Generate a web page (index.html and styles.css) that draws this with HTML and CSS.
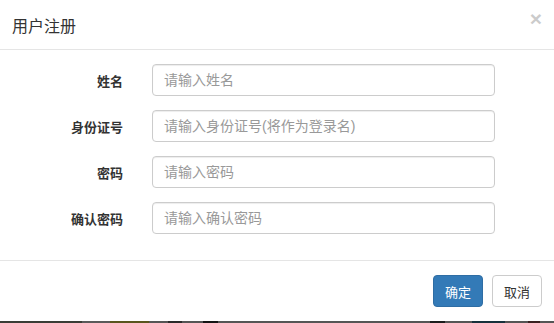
FILE: index.html
```html
<!DOCTYPE html>
<html lang="zh-CN">
<head>
  <meta charset="UTF-8">
  <title>用户注册</title>
  <link rel="stylesheet" href="styles.css">
</head>
<body>

  <div class="modal">
    <div class="modal-header">
      <h4 class="modal-title">用户注册</h4>
      <button type="button" class="close">&times;</button>
    </div>

    <form class="modal-body">
      <label for="name">姓名</label>
      <input type="text" id="name" placeholder="请输入姓名">

      <label for="idcard">身份证号</label>
      <input type="text" id="idcard" placeholder="请输入身份证号(将作为登录名)">

      <label for="pwd">密码</label>
      <input type="password" id="pwd" placeholder="请输入密码">

      <label for="pwd2">确认密码</label>
      <input type="password" id="pwd2" placeholder="请输入确认密码">
    </form>

    <div class="modal-footer">
      <button type="button" class="btn btn-primary">确定</button>
      <button type="button" class="btn btn-default">取消</button>
    </div>
  </div>

  <div class="backdrop"></div>

</body>
</html>
```

FILE: styles.css
```css
body {
  margin: 0;
  font-family: "Liberation Sans", "Noto Sans CJK SC", sans-serif;
  font-size: 14px;
  color: #333;
  background: #fff;
}

.modal {
  background: #fff;
  height: 321px;
  display: flex;
  flex-direction: column;
}

.modal-header {
  height: 49px;
  border-bottom: 1px solid #e5e5e5;
  display: flex;
  justify-content: space-between;
  align-items: center;
  padding: 0 12px 0 12px;
}

.modal-title {
  margin: 0;
  font-size: 16px;
  font-weight: normal;
  color: #333;
}

.close {
  align-self: flex-start;
  margin-top: 8px;
  padding: 0;
  border: none;
  background: none;
  font-family: "Liberation Sans", sans-serif;
  font-size: 21px;
  font-weight: bold;
  line-height: 1;
  color: #000;
  opacity: 0.2;
  cursor: pointer;
}

.modal-body {
  margin: 0;
  padding: 14px 0 26px 0;
  display: grid;
  grid-template-columns: 123px 343px;
  column-gap: 29px;
  row-gap: 14px;
  align-items: center;
  border-bottom: 1px solid #e5e5e5;
}

.modal-body label {
  text-align: right;
  font-size: 13px;
  font-weight: bold;
}

.modal-body input {
  height: 32px;
  box-sizing: border-box;
  padding: 6px 11px;
  border: 1px solid #ccc;
  border-radius: 4px;
  box-shadow: inset 0 1px 1px rgba(0,0,0,0.075);
  font-family: "Liberation Sans", "Noto Sans CJK SC", sans-serif;
  font-size: 14px;
  color: #555;
}

.modal-body input::placeholder {
  color: #999;
}

.modal-footer {
  flex: 1;
  display: flex;
  justify-content: flex-end;
  align-items: flex-start;
  gap: 9px;
  padding: 14px 12px 0 0;
}

.btn {
  width: 50px;
  height: 32px;
  padding: 0;
  border: 1px solid transparent;
  border-radius: 4px;
  font-family: "Liberation Sans", "Noto Sans CJK SC", sans-serif;
  font-size: 13px;
  cursor: pointer;
}

.btn-primary {
  background: #337ab7;
  border-color: #2e6da4;
  color: #fff;
}

.btn-default {
  background: #fff;
  border-color: #ccc;
  color: #333;
}

.backdrop {
  height: 2px;
  background: linear-gradient(to right,
    #3a3d36 0, #3a3d36 82px,
    #5a5a5a 82px, #5a5a5a 110px,
    #59561e 110px, #59561e 149px,
    #555 149px, #555 168px,
    #2a2a2a 168px, #2a2a2a 182px,
    #555 182px, #555 203px,
    #151515 203px, #151515 218px,
    #555 218px, #555 430px,
    #1c1c1c 430px, #1c1c1c 445px,
    #555 445px, #555 472px,
    #17313c 472px, #17313c 505px,
    #555 505px, #555 528px,
    #3a2020 528px, #3a2020 540px,
    #555 540px);
}
```
